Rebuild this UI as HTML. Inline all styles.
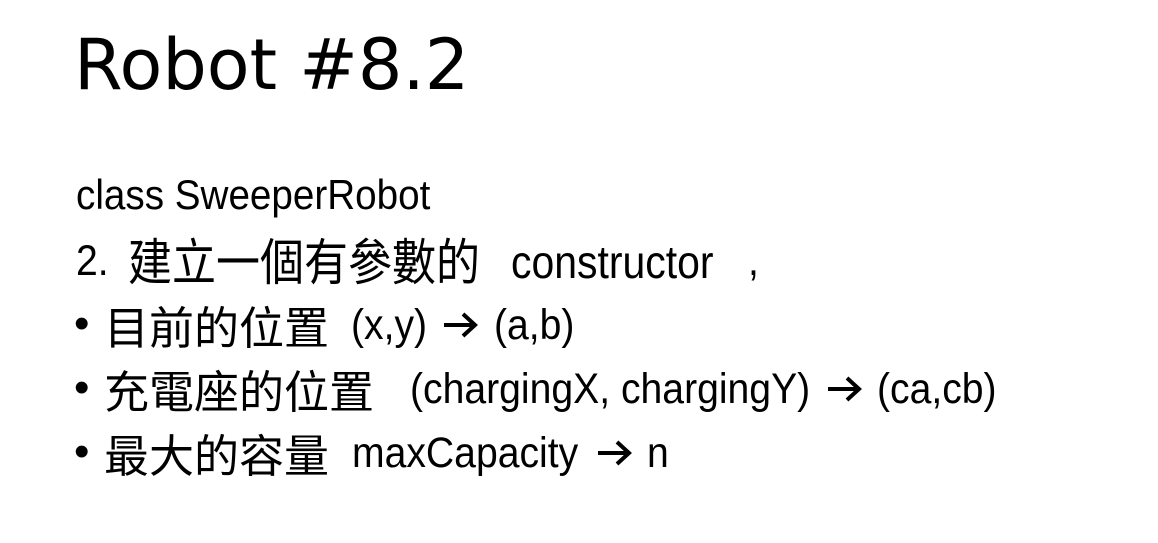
<!DOCTYPE html>
<html><head><meta charset="utf-8"><style>
html,body{margin:0;padding:0;background:#fff;width:1158px;height:543px;overflow:hidden;position:relative}
.t{position:absolute;white-space:pre;line-height:1;color:#000;font-family:"Liberation Sans","Noto Sans CJK TC",sans-serif}
.l{font-size:43px;transform:scaleX(0.91);transform-origin:left top}
.c{font-family:"Noto Sans CJK TC","WenQuanYi Zen Hei",sans-serif}
svg.a{position:absolute;width:38px;height:30px}
</style></head><body>
<div class="t" style="left:74px;top:30px;font-family:'DejaVu Sans',sans-serif;font-size:70px;">Robot #8.2</div>

<div class="t" style="left:76px;top:174px;font-size:42px;transform:scaleX(0.92);transform-origin:left top">class SweeperRobot</div>

<div class="t l" style="left:76px;top:240px;">2.</div>
<div class="t c" style="left:128px;top:234px;font-size:50px;"><span style="display:inline-block;transform:scaleX(0.88);transform-origin:left">建立一個有參數的</span></div>
<div class="t l" style="left:511px;top:239px;font-size:46px;transform:scaleX(0.89)">constructor</div>
<div class="t l" style="left:748px;top:240px;">,</div>

<div class="t" style="left:74px;top:302px;font-size:44px;">•</div>
<div class="t c" style="left:104px;top:302px;font-size:45px;">目前的位置</div>
<div class="t l" style="left:351px;top:304px;">(x,y)</div>
<svg class="a" style="left:442px;top:310px" viewBox="0 0 38 30"><path d="M2 15H33M21 4L33 15L21 26" fill="none" stroke="#000" stroke-width="4"/></svg>
<div class="t l" style="left:494px;top:304px;">(a,b)</div>

<div class="t" style="left:74px;top:366px;font-size:44px;">•</div>
<div class="t c" style="left:104px;top:366px;font-size:45px;">充電座的位置</div>
<div class="t l" style="left:410px;top:368px;">(chargingX, chargingY)</div>
<svg class="a" style="left:826px;top:374px" viewBox="0 0 38 30"><path d="M2 15H33M21 4L33 15L21 26" fill="none" stroke="#000" stroke-width="4"/></svg>
<div class="t l" style="left:877px;top:368px;">(ca,cb)</div>

<div class="t" style="left:74px;top:430px;font-size:44px;">•</div>
<div class="t c" style="left:104px;top:430px;font-size:45px;">最大的容量</div>
<div class="t l" style="left:352px;top:432px;">maxCapacity</div>
<svg class="a" style="left:596px;top:438px" viewBox="0 0 38 30"><path d="M2 15H33M21 4L33 15L21 26" fill="none" stroke="#000" stroke-width="4"/></svg>
<div class="t l" style="left:647px;top:432px;">n</div>
</body></html>
